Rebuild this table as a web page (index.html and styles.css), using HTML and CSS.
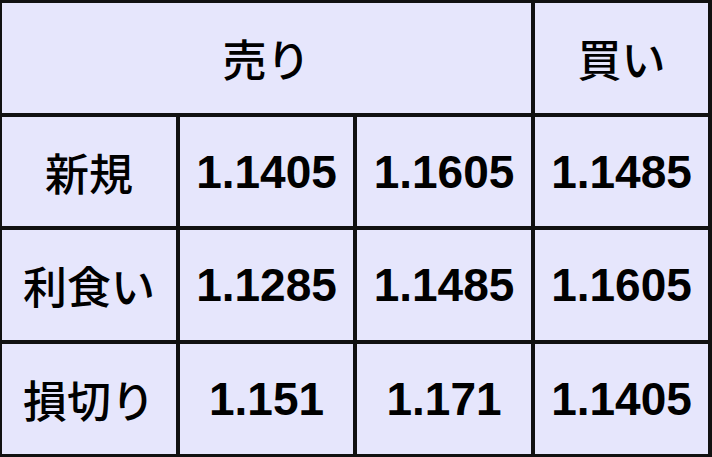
FILE: index.html
```html
<!DOCTYPE html>
<html lang="ja">
<head>
<meta charset="utf-8">
<link rel="stylesheet" href="styles.css">
</head>
<body>
<div class="grid">
  <div class="cell jp span3">売り</div>
  <div class="cell jp">買い</div>

  <div class="cell jp">新規</div>
  <div class="cell num">1.1405</div>
  <div class="cell num">1.1605</div>
  <div class="cell num">1.1485</div>

  <div class="cell jp">利食い</div>
  <div class="cell num">1.1285</div>
  <div class="cell num">1.1485</div>
  <div class="cell num">1.1605</div>

  <div class="cell jp">損切り</div>
  <div class="cell num">1.151</div>
  <div class="cell num">1.171</div>
  <div class="cell num">1.1405</div>
</div>
</body>
</html>
```

FILE: styles.css
```css
html, body {
  margin: 0;
  padding: 0;
  background: #111;
}
.grid {
  width: 712px;
  height: 457px;
  box-sizing: border-box;
  background: #111;
  padding: 3px 4px 3px 2px;
  display: grid;
  grid-template-columns: 174px 173px 174px 173px;
  grid-template-rows: 110px 109px 110px 110px;
  gap: 4px;
}
.cell {
  background: #e6e6fc;
  display: flex;
  align-items: center;
  justify-content: center;
  color: #000;
}
.span3 {
  grid-column: span 3;
}
.jp {
  font-family: "Noto Sans CJK JP", "Noto Sans", sans-serif;
  font-weight: 500;
  font-size: 44px;
}
.num {
  font-family: "Liberation Sans", Arial, sans-serif;
  font-weight: 700;
  font-size: 46px;
}
```
